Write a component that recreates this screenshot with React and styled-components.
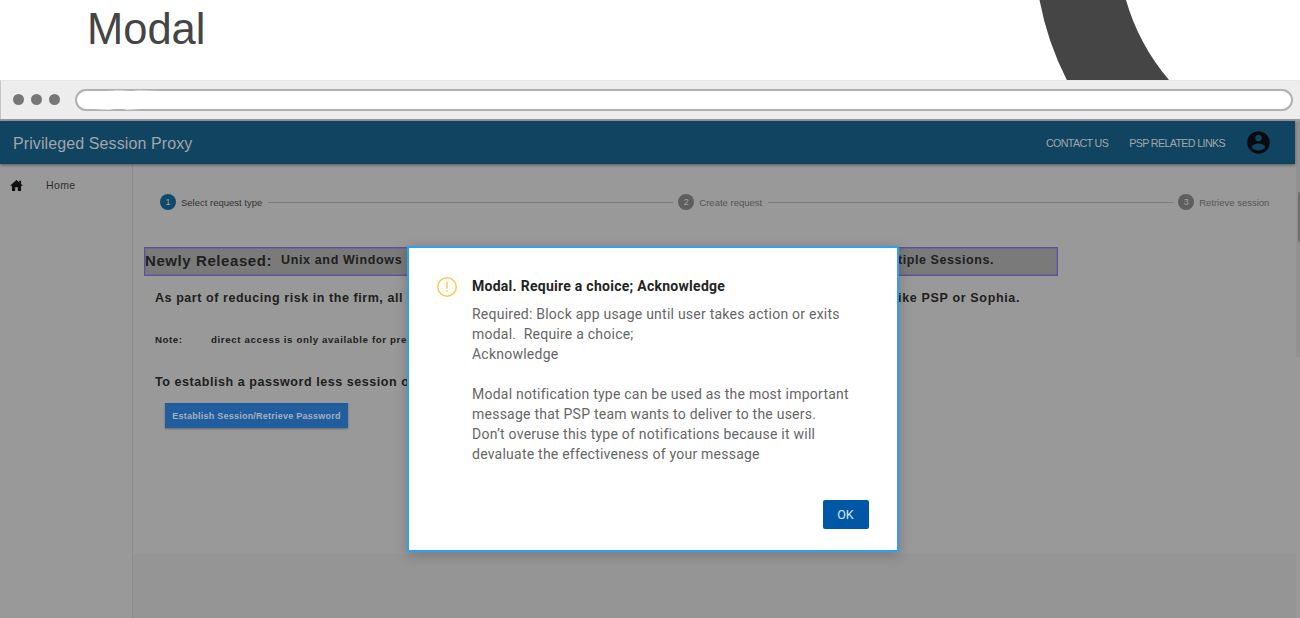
import React from "react";
import styled, { createGlobalStyle } from "styled-components";

const Global = createGlobalStyle`
  * { box-sizing: border-box; }
  html, body { margin: 0; padding: 0; background: #fff; }
  body { font-family: "Liberation Sans", Arial, sans-serif; overflow: hidden; }
`;

const Page = styled.div`
  width: 1300px;
  height: 618px;
  display: flex;
  flex-direction: column;
  overflow: hidden;
`;

const Slide = styled.header`
  height: 80px;
  flex: none;
  display: flex;
  justify-content: space-between;
  padding-left: 87px;
`;

const SlideTitle = styled.h1`
  margin: 4px 0 0;
  font-size: 43.5px;
  line-height: 50px;
  font-weight: 400;
  color: #454545;
`;

const Chrome = styled.div`
  height: 39px;
  flex: none;
  display: flex;
  align-items: center;
  padding: 0 7px 1px 12px;
  background: #ededed;
  border-top: 1px solid #e6e6e6;
  border-left: 1px solid #c4c4c4;
`;

const Dots = styled.div`
  display: flex;
  gap: 7px;
  margin-right: 15px;
`;

const Dot = styled.i`
  width: 11px;
  height: 11px;
  border-radius: 50%;
  background: #777;
`;

const UrlField = styled.div`
  flex: 1;
  position: relative;
  height: 22px;
  border: 2px solid #b0b0b0;
  border-radius: 11px;
  background: #fff;
`;

const Smudge = styled.svg`
  position: absolute;
  left: 6px;
  top: -1px;
`;

const Viewport = styled.div`
  flex: 1;
  display: flex;
  position: relative;
  background: #999;
  border-top: 2px solid #9a9c9e;
`;

const AppFrame = styled.div`
  width: 1296px;
  display: flex;
  flex-direction: column;
`;

const Track = styled.div`
  width: 4px;
  height: 236px;
  padding: 71px 0 0 2px;
  background: #919191;
`;

const Thumb = styled.div`
  height: 50px;
  border-radius: 2px 0 0 2px;
  background: #6b6b6b;
`;

const AppBar = styled.div`
  height: 43px;
  flex: none;
  display: flex;
  align-items: center;
  padding: 0 23px 0 13px;
  margin-right: 1px;
  background: #104461;
  color: #a0a7ac;
  box-shadow: 0 1px 3px rgba(0, 0, 0, 0.45);
  z-index: 1;
`;

const Brand = styled.div`
  flex: 1;
  padding-top: 2px;
  font-size: 16px;
  letter-spacing: 0.1px;
`;

const NavLink = styled.a`
  font-size: 10.7px;
  letter-spacing: -0.63px;
  margin-right: ${(p) => p.$gap}px;
`;

const Body = styled.div`
  flex: 1;
  display: flex;
`;

const Sidebar = styled.nav`
  width: 133px;
  padding: 14px 0 0 10px;
  border-right: 1px solid #8b8b8b;
`;

const NavItem = styled.div`
  display: flex;
  align-items: center;
  height: 14px;
  gap: 23px;
  font-size: 10.5px;
  letter-spacing: 0.4px;
  color: #2e2e2e;
`;

const Main = styled.main`
  flex: 1;
  display: flex;
  flex-direction: column;
`;

const Content = styled.section`
  height: 390px;
  padding: 28px 0 0;
`;

const Below = styled.div`
  flex: 1;
  background: #959595;
`;

const Stepper = styled.div`
  display: flex;
  align-items: center;
  height: 20px;
  padding: 0 26px 0 27px;
`;

const StepMark = styled.span`
  width: 16px;
  height: 16px;
  flex: none;
  border-radius: 50%;
  background: ${(p) => (p.$active ? "#104a6b" : "#5e5e5e")};
  color: #a3a3a3;
  font-size: 9px;
  line-height: 16px;
  text-align: center;
`;

const StepLabel = styled.span`
  margin-left: 5px;
  font-size: 9.5px;
  white-space: nowrap;
  color: ${(p) => (p.$active ? "#333" : "#555")};
`;

const StepLine = styled.span`
  width: ${(p) => p.$w}px;
  height: 1px;
  margin: 0 5px 0 6px;
  background: #7c7c7c;
`;

const Banner = styled.div`
  display: flex;
  align-items: center;
  width: 914px;
  height: 29px;
  margin: 35px 0 0 11px;
  padding-bottom: 3px;
  border: 1px solid #5a539b;
  box-shadow: inset 0 0 0 1px #6e6a8a;
  background: #7a7a7a;
`;

const Copy = styled.p`
  display: flex;
  align-items: center;
  height: 20px;
  margin: ${(p) => p.$top}px 0 0 22px;
`;

const Strong = styled.span`
  width: ${(p) => (p.$w ? `${p.$w}px` : "auto")};
  flex: none;
  overflow: hidden;
  white-space: nowrap;
  font-weight: 700;
  font-size: ${(p) => p.$size || 12.5}px;
  letter-spacing: ${(p) => p.$track || 0.56}px;
  color: #202020;
`;

const SessionButton = styled.button`
  display: block;
  width: 183px;
  height: 25px;
  margin: 11px 0 0 32px;
  padding: 0;
  border: 0;
  background: #205e9f;
  box-shadow: 0 1px 2px rgba(0, 0, 0, 0.3);
  color: #a7b0ba;
  font: 700 9px "Liberation Sans", Arial, sans-serif;
  letter-spacing: 0.24px;
`;

const Dialog = styled.div`
  position: absolute;
  left: 407px;
  top: 125px;
  width: 491.5px;
  height: 306px;
  display: flex;
  flex-direction: column;
  padding: 29px 28px 21px;
  border: 2px solid #309fed;
  background: #fff;
  box-shadow: 0 3px 12px rgba(0, 0, 0, 0.22);
  font-family: Roboto, sans-serif;
  z-index: 2;
`;

const Message = styled.div`
  flex: 1;
  display: flex;
  gap: 15px;
`;

const DialogTitle = styled.h2`
  margin: 0 0 8px;
  font-size: 14px;
  line-height: 19px;
  font-weight: 700;
  letter-spacing: 0.27px;
  color: #242424;
`;

const DialogText = styled.p`
  margin: 0;
  font-size: 14px;
  line-height: 20px;
  letter-spacing: 0.235px;
  white-space: pre;
  color: #666;
`;

const OkButton = styled.button`
  align-self: flex-end;
  width: 46px;
  height: 29px;
  padding: 0;
  border: 0;
  border-radius: 2px;
  background: #0057a6;
  color: #dce8f3;
  font: 400 12.5px Roboto, sans-serif;
`;

const message = `Required: Block app usage until user takes action or exits
modal.  Require a choice;
Acknowledge

Modal notification type can be used as the most important
message that PSP team wants to deliver to the users.
Don’t overuse this type of notifications because it will
devaluate the effectiveness of your message`;

export default function App() {
  return (
    <Page>
      <Global />
      <Slide>
        <SlideTitle>Modal</SlideTitle>
        <svg width="300" height="80" viewBox="1000 0 300 80">
          <path d="M1039.5 0A299 299 0 0 0 1066.8 80H1169A215 215 0 0 1 1126 0Z" fill="#454545" />
        </svg>
      </Slide>
      <Chrome>
        <Dots>
          <Dot />
          <Dot />
          <Dot />
        </Dots>
        <UrlField>
          <Smudge width="80" height="20" viewBox="0 0 80 20" fill="#fff">
            <path d="M24 1L34 0L48 1L56 0L74 1V4H24Z" opacity=".6" />
            <path d="M4 17L10 19L26 20L36 18L44 20L58 19L68 17Z" opacity=".7" />
          </Smudge>
        </UrlField>
      </Chrome>
      <Viewport>
        <AppFrame>
          <AppBar>
            <Brand>Privileged Session Proxy</Brand>
            <NavLink $gap={21}>CONTACT US</NavLink>
            <NavLink $gap={20}>PSP RELATED LINKS</NavLink>
            <svg width="27" height="27" viewBox="0 0 24 24" fill="#080c0f">
              <path d="M12 2C6.48 2 2 6.48 2 12s4.48 10 10 10 10-4.48 10-10S17.52 2 12 2zm0 3c1.66 0 3 1.34 3 3s-1.34 3-3 3-3-1.34-3-3 1.34-3 3-3zm0 14.2c-2.5 0-4.71-1.28-6-3.22.03-1.99 4-3.08 6-3.08 1.99 0 5.97 1.09 6 3.08-1.29 1.94-3.5 3.22-6 3.22z" />
            </svg>
          </AppBar>
          <Body>
            <Sidebar>
              <NavItem>
                <svg width="13" height="13" viewBox="2 2 20 19" fill="#101010">
                  <path d="M10 20v-6h4v6h5v-8h3L12 3 2 12h3v8h5zM16 4h3v5l-3-3z" />
                </svg>
                Home
              </NavItem>
            </Sidebar>
            <Main>
              <Content>
                <Stepper>
                  <StepMark $active>1</StepMark>
                  <StepLabel $active>Select request type</StepLabel>
                  <StepLine $w={405} />
                  <StepMark>2</StepMark>
                  <StepLabel>Create request</StepLabel>
                  <StepLine $w={405} />
                  <StepMark>3</StepMark>
                  <StepLabel>Retrieve session</StepLabel>
                </Stepper>
                <Banner>
                  <Strong $w={136} $size={15} $track={0.58}>Newly Released:</Strong>
                  <Strong $w={617} $track={0.64}>Unix and Windows</Strong>
                  <Strong>tiple Sessions.</Strong>
                </Banner>
                <Copy $top={12}>
                  <Strong $w={743}>As part of reducing risk in the firm, all</Strong>
                  <Strong $track={0.66}>ike PSP or Sophia.</Strong>
                </Copy>
                <Copy $top={21}>
                  <Strong $w={56} $size={9.7}>Note:</Strong>
                  <Strong $size={9.7} $track={0.62}>direct access is only available for pre</Strong>
                </Copy>
                <Copy $top={23}>
                  <Strong>To establish a password less session o</Strong>
                </Copy>
                <SessionButton>Establish Session/Retrieve Password</SessionButton>
              </Content>
              <Below />
            </Main>
          </Body>
        </AppFrame>
        <Track>
          <Thumb />
        </Track>
        <Dialog role="dialog">
          <Message>
            <svg width="20" height="20" viewBox="0 0 20 20" fill="none" stroke="#fdc94d" strokeWidth="1.5">
              <circle cx="10" cy="10" r="9.2" />
              <path d="M10 5v6.4M10 13.2v1.6" />
            </svg>
            <div>
              <DialogTitle>Modal. Require a choice; Acknowledge</DialogTitle>
              <DialogText>{message}</DialogText>
            </div>
          </Message>
          <OkButton>OK</OkButton>
        </Dialog>
      </Viewport>
    </Page>
  );
}
